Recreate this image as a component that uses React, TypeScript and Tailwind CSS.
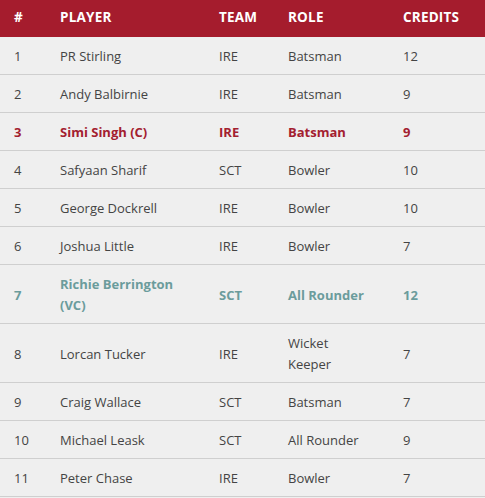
type Row = { no: string; player: React.ReactNode; team: string; role: React.ReactNode; credits: string; tone?: "c" | "vc" };

const rows: Row[] = [
  { no: "1", player: "PR Stirling", team: "IRE", role: "Batsman", credits: "12" },
  { no: "2", player: "Andy Balbirnie", team: "IRE", role: "Batsman", credits: "9" },
  { no: "3", player: "Simi Singh (C)", team: "IRE", role: "Batsman", credits: "9", tone: "c" },
  { no: "4", player: "Safyaan Sharif", team: "SCT", role: "Bowler", credits: "10" },
  { no: "5", player: "George Dockrell", team: "IRE", role: "Bowler", credits: "10" },
  { no: "6", player: "Joshua Little", team: "IRE", role: "Bowler", credits: "7" },
  { no: "7", player: <>Richie Berrington<br />(VC)</>, team: "SCT", role: "All Rounder", credits: "12", tone: "vc" },
  { no: "8", player: "Lorcan Tucker", team: "IRE", role: <>Wicket<br />Keeper</>, credits: "7" },
  { no: "9", player: "Craig Wallace", team: "SCT", role: "Batsman", credits: "7" },
  { no: "10", player: "Michael Leask", team: "SCT", role: "All Rounder", credits: "9" },
  { no: "11", player: "Peter Chase", team: "IRE", role: "Bowler", credits: "7" },
];

export default function App() {
  return (
    <div className="w-[485px] h-[498px] bg-[#efefef] overflow-hidden" style={{ fontFamily: '"Open Sans", sans-serif' }}>
      <table className="w-full border-collapse table-fixed text-[13px] leading-[21px]">
        <colgroup>
          <col className="w-[46px]" />
          <col className="w-[159px]" />
          <col className="w-[69px]" />
          <col className="w-[115px]" />
          <col className="w-[96px]" />
        </colgroup>
        <thead>
          <tr className="bg-[#a51c2d] text-white font-bold uppercase text-left h-[37px] text-[13.5px] tracking-[0.2px]">
            <th className="pl-[14px] pb-[3px]">#</th>
            <th className="pl-[14px] pb-[3px]">Player</th>
            <th className="pl-[14px] pb-[3px]">Team</th>
            <th className="pl-[14px] pb-[3px]">Role</th>
            <th className="pl-[14px] pb-[3px]">Credits</th>
          </tr>
        </thead>
        <tbody>
          {rows.map((r) => {
            const tone =
              r.tone === "c" ? "text-[#a3202f] font-bold" : r.tone === "vc" ? "text-[#6b9c9c] font-bold" : "text-[#444]";
            return (
              <tr key={r.no} className={`border-b border-[#cfcfcf] ${tone}`}>
                <td className="pl-[14px] pt-[9px] pb-[7px] align-middle">{r.no}</td>
                <td className="pl-[14px] pt-[9px] pb-[7px] align-middle">{r.player}</td>
                <td className="pl-[14px] pt-[9px] pb-[7px] align-middle">{r.team}</td>
                <td className="pl-[14px] pt-[9px] pb-[7px] align-middle">{r.role}</td>
                <td className="pl-[14px] pt-[9px] pb-[7px] align-middle">{r.credits}</td>
              </tr>
            );
          })}
        </tbody>
      </table>
    </div>
  );
}
